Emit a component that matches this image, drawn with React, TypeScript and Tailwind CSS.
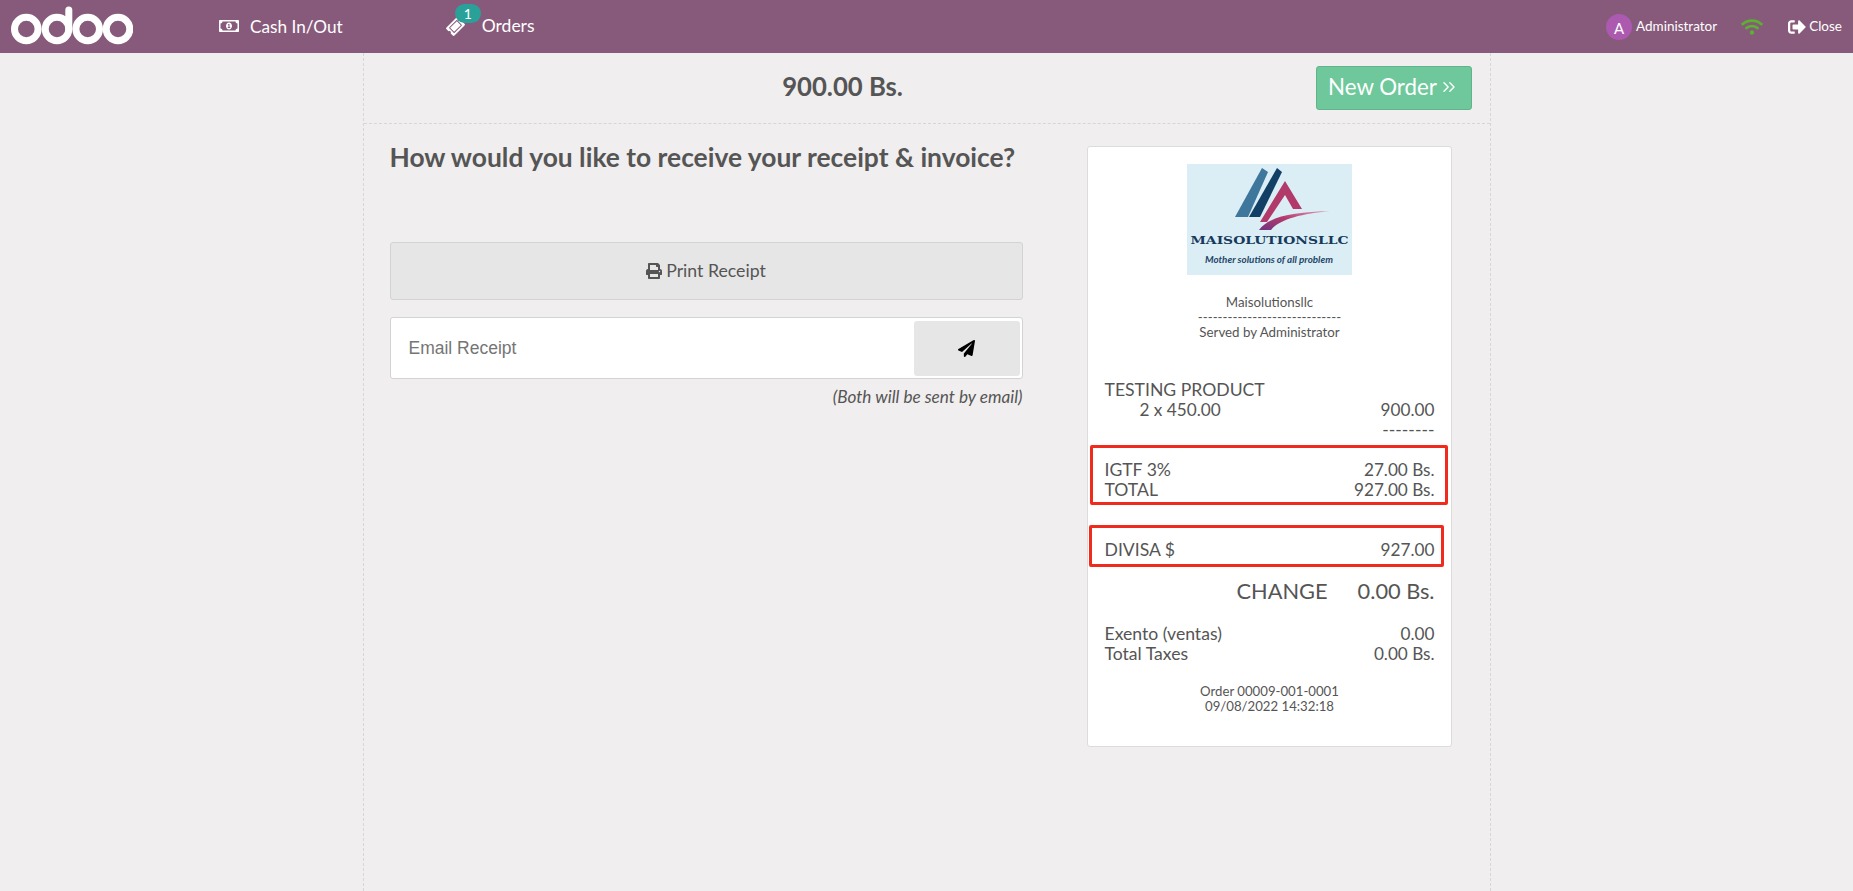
import { FunctionComponent } from "react";
import { ChevronsRight } from "lucide-react";
import {
  FaPaperPlane,
  FaPrint,
  FaRegMoneyBillAlt,
  FaSignOutAlt,
  FaTicketAlt,
  FaWifi,
} from "react-icons/fa";

const Logo = () => (
  <svg viewBox="0 0 165 111" className="w-[165px] h-[111px] block">
    <defs>
      <linearGradient id="swoosh" x1="0" y1="1" x2="1" y2="0">
        <stop offset="0" stopColor="#6f3480" />
        <stop offset="0.5" stopColor="#b53a6c" />
        <stop offset="1" stopColor="#d9a0b8" />
      </linearGradient>
    </defs>
    <rect width="165" height="111" fill="#dceef5" />
    <polygon points="75,4 81,8 61,53 48,53" fill="#3f769c" />
    <polygon points="90,4 95,8 73,53 62,53" fill="#123f66" />
    <polygon points="98,17 115,45 106,45 98,31 80,58 73,58" fill="#b23a6a" />
    <path d="M72,66 C82,52 108,48 143,47 C116,50 94,54 84,66 Z" fill="url(#swoosh)" />
    <text x="82.5" y="80" textAnchor="middle" textLength="158" lengthAdjust="spacingAndGlyphs" fontFamily="'DejaVu Serif', serif" fontWeight="700" fontSize="11.5" fill="#153a5c">
      MAISOLUTIONSLLC
    </text>
    <text x="82" y="99" textAnchor="middle" textLength="128" lengthAdjust="spacingAndGlyphs" fontFamily="'Lato', sans-serif" fontStyle="italic" fontWeight="700" fontSize="9" fill="#1f4668">
      Mother solutions of all problem
    </text>
  </svg>
);

const Row: FunctionComponent<{ left: string; right: string; className?: string }> = ({
  left,
  right,
  className,
}) => (
  <div className={`flex justify-between h-[20px] leading-[20px] ${className ?? ""}`}>
    <span>{left}</span>
    <span className="text-[17.2px]">{right}</span>
  </div>
);

const Receipt = () => (
  <div className="w-[365px] h-[601px] bg-white border border-[#dcdcdc] rounded-[3px] pl-[17px] pr-[16px] pt-[17px] text-[#555555] text-[17.6px]">
    <div className="flex justify-center">
      <Logo />
    </div>
    <div className="mt-[20px] text-center text-[13.3px] leading-[15px] text-[#555555]">
      <div>Maisolutionsllc</div>
      <div className="leading-[15px]">-----------------------------</div>
      <div>Served by Administrator</div>
    </div>

    <div className="mt-[40px]">
      <div className="h-[20px] leading-[20px]">TESTING PRODUCT</div>
      <Row left="2 x 450.00" right="900.00" className="pl-[35px] text-[17.2px]" />
      <div className="text-right h-[20px] leading-[20px]">--------</div>
    </div>

    <div className="relative mt-[20px]">
      <Row left="IGTF 3%" right="27.00 Bs." />
      <Row left="TOTAL" right="927.00 Bs." />
      <div className="absolute left-[-15px] right-[-13px] top-[-15px] h-[60px] border-[3px] border-[#f02a1c] rounded-[2px]" />
    </div>

    <div className="relative mt-[40px]">
      <Row left="DIVISA $" right="927.00" />
      <div className="absolute left-[-16px] right-[-9px] top-[-15px] h-[42px] border-[3px] border-[#f02a1c] rounded-[2px]" />
    </div>

    <div className="mt-[18px] flex justify-end text-[21.8px] leading-[26px]">
      <span>CHANGE</span>
      <span className="ml-[30px]">0.00 Bs.</span>
    </div>

    <div className="mt-[20px]">
      <Row left="Exento (ventas)" right="0.00" />
      <Row left="Total Taxes" right="0.00 Bs." />
    </div>

    <div className="mt-[20px] text-center text-[13.2px] leading-[15px]">
      <div>Order 00009-001-0001</div>
      <div>09/08/2022 14:32:18</div>
    </div>
  </div>
);

const App = () => {
  return (
    <div className="h-[891px] flex flex-col overflow-hidden bg-[#f0eeee] font-['Lato',sans-serif] text-[#555555]">
      <header className="h-[53px] shrink-0 bg-[#875a7b] text-white flex items-center">
        <svg viewBox="0 0 122 53" className="w-[122px] h-[53px] ml-[11px]" fill="none" stroke="#ffffff" strokeWidth="7">
          <circle cx="15.3" cy="29" r="11.8" />
          <circle cx="46" cy="29" r="11.8" />
          <path d="M57.8 10 V29" strokeLinecap="round" />
          <circle cx="76.7" cy="29" r="11.8" />
          <circle cx="107" cy="29" r="11.8" />
        </svg>
        <div className="flex items-center ml-[86px] text-[17.2px]">
          <FaRegMoneyBillAlt className="w-[20px] h-[20px]" />
          <span className="ml-[11px]">Cash In/Out</span>
        </div>
        <div className="relative flex items-center ml-[104px] text-[17.5px]">
          <FaTicketAlt className="w-[17px] h-[17px] -rotate-45" />
          <span className="absolute left-[8px] top-[-9px] h-[19px] w-[26px] rounded-full bg-[#2aa198] text-center text-[14px] leading-[19px]">1</span>
          <span className="ml-[18px]">Orders</span>
        </div>
        <div className="ml-auto flex items-center text-[13.5px]">
          <span className="w-[26px] h-[26px] rounded-full bg-[#ac5aaf] text-center text-[15px] leading-[28px]">A</span>
          <span className="ml-[4px]">Administrator</span>
          <FaWifi className="ml-[24px] w-[22px] h-[22px] text-[#5cb130]" />
          <FaSignOutAlt className="ml-[25px] w-[18px] h-[18px]" />
          <span className="ml-[3px] mr-[11px]">Close</span>
        </div>
      </header>

      <main className="flex-1 flex justify-center">
        <div className="w-[1128px] border-x border-dashed border-[#d6d6d6]">
          <div className="relative h-[71px] border-b border-dashed border-[#d6d6d6] flex items-center justify-center pr-[168px]">
            <span className="text-[25.7px] font-bold mt-[-4px]">900.00 Bs.</span>
            <button className="absolute right-[18px] top-[13px] w-[156px] h-[44px] rounded-[3px] bg-[#6ec89b] border border-[#5fb48a] text-white text-[22.3px] flex items-center justify-center gap-[2px] pb-[2px]">
              New Order
              <ChevronsRight className="w-[20px] h-[20px]" strokeWidth={1.7} />
            </button>
          </div>

          <div className="flex items-start pl-[26px] pt-[22px]">
            <div className="w-[633px]">
              <h1 className="text-[26.4px] font-bold leading-[32px] mt-[-5px]">
                How would you like to receive your receipt &amp; invoice?
              </h1>
              <button className="mt-[69px] w-full h-[58px] bg-[#e6e6e6] border border-[#d3d3d3] rounded-[3px] text-[17.7px] flex items-center justify-center gap-[4px]">
                <FaPrint className="w-[16px] h-[16px]" />
                Print Receipt
              </button>
              <div className="mt-[17px] h-[62px] bg-white border border-[#d3d3d3] rounded-[3px] flex items-center pl-[18px] pr-[2px]">
                <span className="font-['Liberation_Sans',sans-serif] text-[17.5px] text-[#757575]">Email Receipt</span>
                <div className="ml-auto w-[106px] h-[55px] bg-[#e6e6e6] rounded-[3px] flex items-center justify-center">
                  <FaPaperPlane className="w-[17px] h-[17px] text-black" />
                </div>
              </div>
              <div className="mt-[8px] text-right italic text-[17.2px] leading-[20px]">(Both will be sent by email)</div>
            </div>
            <div className="ml-[64px]">
              <Receipt />
            </div>
          </div>
        </div>
      </main>
    </div>
  );
};

export default App;
